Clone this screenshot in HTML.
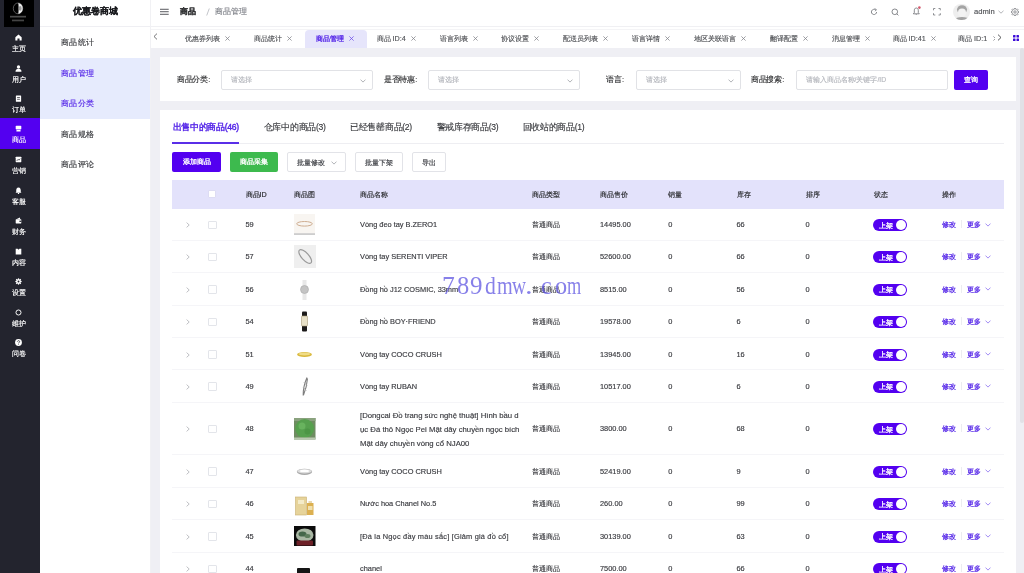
<!DOCTYPE html>
<html><head><meta charset="utf-8">
<style>
*{box-sizing:border-box;margin:0;padding:0}
html,body{width:1024px;height:573px;overflow:hidden;background:#efeff4;font-family:"Liberation Sans",sans-serif;color:#303133;-webkit-text-stroke-width:0.15px}
.abs{position:absolute}
#side{left:0;top:0;width:40px;height:573px;background:#23242e}
#logo{left:4px;top:0;width:30px;height:27px;background:#000}
.si{position:absolute;left:0;width:40px;height:31px;color:#fff;font-size:7px;text-align:center}
.si .ic{position:absolute;left:15px;top:7px;width:7px;height:7px}
.si .tx{position:absolute;left:0;width:38px;top:17px;line-height:9px;font-weight:normal;font-size:7.2px}
.si.on{background:#5300f0;height:31.5px;margin-top:-1px}
#side2{left:40px;top:0;width:111px;height:573px;background:#fff;border-right:1px solid #f1f1f4}
#title{left:0;top:0;width:110px;height:27px;line-height:23px;text-align:center;font-size:9px;font-weight:bold;color:#17181c;border-bottom:1px solid #efeff3}
.mi{position:absolute;left:0;width:110px;height:30.5px;line-height:31px;padding-left:21px;font-size:8.4px;letter-spacing:0.35px;color:#3b3c40}
.mi.on{background:#e6ebfd;color:#5526e8}
#hdr{left:151px;top:0;width:873px;height:27px;background:#fff;border-bottom:1px solid #f0f0f3}
#tabs{left:151px;top:27px;width:873px;height:21px;background:#fff}
.tab{position:absolute;top:2.6px;height:18.4px}
.tab.on{background:#e6e5fb;border-radius:4px 4px 0 0}
.tabt{position:absolute;top:6.7px;line-height:9.5px;font-size:7.2px;color:#505256;white-space:nowrap}
.tabt.on{color:#5526e8;-webkit-text-stroke-width:0.3px}
.tabt.on .x path{stroke:#6a4ae8}
.tabt .x{margin-left:5.4px;vertical-align:-0.3px}
.card{position:absolute;left:160px;width:856px;background:#fff}
.lbl{position:absolute;font-size:7.5px;letter-spacing:-0.35px;color:#303133;line-height:10px;margin-top:-0.4px}
.sel{position:absolute;height:19.5px;border:1px solid #e1e2e6;border-radius:2px;background:#fff}
.sel .ph{position:absolute;left:9px;top:3.5px;font-size:6.8px;color:#b5b7bd;line-height:10px}
.btn{position:absolute;height:19.5px;line-height:19px;border-radius:2px;font-size:7.2px;text-align:center;-webkit-text-stroke-width:0.3px}
.btnw{border:1px solid #e2e3e8;color:#45474c;background:#fff;-webkit-text-stroke-width:0.2px}
.ctab{position:absolute;top:11.5px;font-size:8.6px;letter-spacing:-0.3px;line-height:10px;color:#3b3c40;white-space:nowrap}
.ctab.on{color:#5526e8;font-weight:normal;-webkit-text-stroke-width:0.4px}
#tbl{position:absolute;left:172px;top:180.25px;width:832px}
.tr{position:relative;width:832px;border-bottom:1px solid #f5f5f8;height:32.4px}
.th{background:#e3e2fb;height:28.25px;border-bottom:none}
.rc{position:absolute;left:0;width:832px;height:32.4px}
.c{position:absolute;top:11.5px;font-size:7.4px;line-height:9.5px;color:#38393e;white-space:nowrap}
.th .c{top:9.5px;font-size:7.2px;color:#2e2f33;-webkit-text-stroke-width:0.18px}
.nm3{top:0;line-height:14px;font-size:7.75px}
.ex{position:absolute;left:14px;top:13.5px}
.cb{position:absolute;left:36px;top:12px;width:8.6px;height:8.5px;border:1px solid #e3e5ea;border-radius:1px;background:#fff}
.hcb{left:36px;top:10px;width:8px;height:7.6px;border-color:#dddcf3}
.im{position:absolute}
.sw{position:absolute;left:701px;top:10.5px;width:34px;height:12px;border-radius:6px;background:#5300f0}
.sw span{position:absolute;left:5.5px;top:1.5px;font-size:6.8px;line-height:9px;color:#fff;-webkit-text-stroke-width:0.3px}
.sw i{position:absolute;right:1px;top:1px;width:10px;height:10px;border-radius:50%;background:#fff}
.op{position:absolute;left:769.75px;top:11.5px;white-space:nowrap;font-size:7.2px;line-height:9.5px;color:#5526e8;-webkit-text-stroke-width:0.25px}
.op b{display:inline-block;width:0.7px;height:8px;background:#ececf0;margin:0 5.5px 0 5.5px;vertical-align:-1px}
.op svg{margin-left:4px;vertical-align:0.5px}
#wm span{position:absolute;top:265.5px;font-family:'Liberation Serif',serif;font-size:25.6px;line-height:40px;color:rgba(95,85,225,0.75);-webkit-text-stroke-width:0;transform-origin:0 0;white-space:nowrap}
</style></head><body><div id="root" style="position:absolute;left:0;top:0;width:1024px;height:573px;will-change:transform">

<!-- dark sidebar -->
<div id="side" class="abs">
  <div id="logo" class="abs"><svg width="30" height="27" viewBox="0 0 30 27" style="position:absolute;left:0;top:0">
    <ellipse cx="14" cy="8.4" rx="4.7" ry="5.4" fill="none" stroke="#aaa" stroke-width="0.5"/>
    <path d="M14 3 A4.7 5.4 0 0 1 14 13.8 A0.6 5.4 0 0 0 14 3 Z" fill="#eeeeee"/>
    <ellipse cx="16.2" cy="8.4" rx="1.4" ry="2.4" fill="#9a9a9a"/>
    <rect x="6" y="15.8" width="16" height="1.7" fill="#4c4c4c"/>
    <rect x="8" y="19.6" width="12" height="1.7" fill="#444"/>
  </svg></div>
  <div class="si" style="top:27.00px"><svg class="ic" viewBox="0 0 8 8"><path d="M4 0.6 L7.6 3.6 V7.4 H5.2 V5.2 H2.8 V7.4 H0.4 V3.6 Z" fill="#fff"/></svg><div class="tx">主页</div></div>
  <div class="si" style="top:57.50px"><svg class="ic" viewBox="0 0 8 8"><circle cx="4" cy="2.3" r="1.9" fill="#fff"/><path d="M0.6 7.6 C0.6 5 2 4.6 4 4.6 C6 4.6 7.4 5 7.4 7.6 Z" fill="#fff"/></svg><div class="tx">用户</div></div>
  <div class="si" style="top:88.00px"><svg class="ic" viewBox="0 0 8 8"><rect x="1" y="0.6" width="6" height="7" rx="0.6" fill="#fff"/><rect x="2.4" y="2.6" width="3.2" height="0.8" fill="#23242e"/><rect x="2.4" y="4.4" width="3.2" height="0.8" fill="#23242e"/></svg><div class="tx">订单</div></div>
  <div class="si on" style="top:118.50px"><svg class="ic" viewBox="0 0 8 8"><rect x="0.8" y="0.8" width="6.4" height="4.4" rx="0.8" fill="#fff"/><rect x="1.6" y="5.8" width="4.8" height="1.6" rx="0.4" fill="#fff"/></svg><div class="tx">商品</div></div>
  <div class="si" style="top:149.00px"><svg class="ic" viewBox="0 0 8 8"><rect x="0.8" y="0.8" width="6.4" height="6.4" rx="0.5" fill="#fff"/><path d="M2 5.6 L3.6 3.8 L4.6 4.8 L6 3" stroke="#23242e" stroke-width="0.8" fill="none"/></svg><div class="tx">营销</div></div>
  <div class="si" style="top:179.50px"><svg class="ic" viewBox="0 0 8 8"><path d="M4 0.5 C6 0.5 6.6 2.2 6.6 4 V5.6 L7.4 6.6 H0.6 L1.4 5.6 V4 C1.4 2.2 2 0.5 4 0.5 Z" fill="#fff"/><circle cx="4" cy="7.3" r="0.8" fill="#fff"/></svg><div class="tx">客服</div></div>
  <div class="si" style="top:210.00px"><svg class="ic" viewBox="0 0 8 8"><rect x="0.8" y="2.6" width="6.4" height="4.8" rx="0.5" fill="#fff"/><path d="M1.5 2.6 L5.5 0.6 L6 2.6 Z" fill="#fff"/><rect x="5" y="4.2" width="2.2" height="1.4" fill="#23242e"/></svg><div class="tx">财务</div></div>
  <div class="si" style="top:240.50px"><svg class="ic" viewBox="0 0 8 8"><path d="M0.8 0.8 H3 L4 2 L5 0.8 H7.2 V7.4 H0.8 Z" fill="#fff"/></svg><div class="tx">内容</div></div>
  <div class="si" style="top:271.00px"><svg class="ic" viewBox="0 0 8 8"><circle cx="4" cy="4" r="2.6" fill="#fff"/><g stroke="#fff" stroke-width="1.4"><line x1="4" y1="0.4" x2="4" y2="7.6"/><line x1="0.4" y1="4" x2="7.6" y2="4"/><line x1="1.4" y1="1.4" x2="6.6" y2="6.6"/><line x1="6.6" y1="1.4" x2="1.4" y2="6.6"/></g><circle cx="4" cy="4" r="1.1" fill="#23242e"/></svg><div class="tx">设置</div></div>
  <div class="si" style="top:301.50px"><svg class="ic" viewBox="0 0 8 8"><circle cx="4" cy="4" r="2.9" stroke="#fff" stroke-width="1.1" fill="none"/></svg><div class="tx">维护</div></div>
  <div class="si" style="top:332.00px"><svg class="ic" viewBox="0 0 8 8"><circle cx="4" cy="4" r="3.9" fill="#fff"/><path d="M2.8 3.1 C2.8 1.5 5.3 1.5 5.3 3 C5.3 3.9 4.1 4 4.1 5" stroke="#23242e" stroke-width="0.85" fill="none"/><circle cx="4.1" cy="6.2" r="0.5" fill="#23242e"/></svg><div class="tx">问卷</div></div>
</div>

<!-- secondary sidebar -->
<div id="side2" class="abs">
  <div id="title" class="abs">优惠卷商城</div>
  <div class="mi" style="top:27px">商品统计</div>
  <div class="mi on" style="top:57.5px">商品管理</div>
  <div class="mi on" style="top:88px">商品分类</div>
  <div class="mi" style="top:118.5px">商品规格</div>
  <div class="mi" style="top:149px">商品评论</div>
</div>

<div id="hdr" class="abs">
  <svg class="abs" style="left:9.3px;top:8px" width="9" height="7" viewBox="0 0 9 7"><rect x="0" y="0.8" width="8.7" height="0.9" fill="#45474c"/><rect x="0" y="3.3" width="8.7" height="0.9" fill="#45474c"/><rect x="0" y="5.8" width="8.7" height="0.9" fill="#45474c"/></svg>
  <div class="abs" style="left:29px;top:7px;font-size:8px;line-height:10px;font-weight:bold;color:#303133">商品</div>
  <svg class="abs" style="left:54.5px;top:8px" width="4" height="8" viewBox="0 0 4 8"><path d="M3.3 0.5 L0.7 7.5" stroke="#b4b6bc" stroke-width="0.8"/></svg>
  <div class="abs" style="left:63.5px;top:7px;font-size:8px;line-height:10px;color:#80838a">商品管理</div>
  <svg class="abs" style="left:719px;top:7.5px" width="8" height="8" viewBox="0 0 8 8"><path d="M6.6 4 A2.6 2.6 0 1 1 5.6 1.9" stroke="#6a6c71" stroke-width="0.8" fill="none"/><path d="M4.6 0.6 L6.4 1.6 L5.2 3.2" stroke="#6a6c71" stroke-width="0.75" fill="none"/></svg>
  <svg class="abs" style="left:739.5px;top:7.5px" width="8" height="8" viewBox="0 0 8 8"><circle cx="3.8" cy="3.8" r="2.8" stroke="#6a6c71" stroke-width="0.8" fill="none"/><path d="M5.8 5.8 L7.4 7.4" stroke="#6a6c71" stroke-width="0.8"/></svg>
  <svg class="abs" style="left:761px;top:6px" width="9" height="9" viewBox="0 0 9 9"><path d="M4.3 2 C6 2 6.3 3.4 6.3 4.8 V6.6 L7.3 7.8 H1.3 L2.3 6.6 V4.8 C2.3 3.4 2.6 2 4.3 2 Z" stroke="#6a6c71" stroke-width="0.8" fill="none"/><path d="M3.7 8.6 H4.9" stroke="#6a6c71" stroke-width="0.6"/><circle cx="7.4" cy="1.6" r="1.3" fill="#d4566a"/></svg>
  <svg class="abs" style="left:781.5px;top:8px" width="8" height="7.5" viewBox="0 0 8 7.5"><path d="M0.5 2.3 V0.5 H2.3 M5.5 0.5 H7.3 V2.3 M7.3 5.2 V7 H5.5 M2.3 7 H0.5 V5.2" stroke="#74767b" stroke-width="0.8" fill="none"/></svg>
  <div class="abs" style="left:802.2px;top:3.5px;width:16.6px;height:16.6px;border-radius:50%;overflow:hidden;background:#eeeeee"><svg style="position:absolute;left:-0.7px;top:-0.7px" width="18" height="18" viewBox="0 0 18 18"><ellipse cx="9" cy="6.6" rx="5" ry="4.3" fill="#a4a4a4"/><ellipse cx="9" cy="9.6" rx="4" ry="4.2" fill="#f3f3f3"/><path d="M1 17 C3 13 15 13 17 17 L17 19 L1 19 Z" fill="#a3a3a3"/></svg></div>
  <div class="abs" style="left:823px;top:6.5px;font-size:7.6px;line-height:10px;color:#505256">admin</div>
  <svg class="abs" style="left:847px;top:9.5px" width="6" height="4" viewBox="0 0 6 4"><path d="M0.5 0.8 L3 3.2 L5.5 0.8" stroke="#909399" stroke-width="0.7" fill="none"/></svg>
  <svg class="abs" style="left:860px;top:7.5px" width="8" height="8" viewBox="0 0 8 8"><path d="M6.83 3.37 L7.75 3.39 L7.75 4.61 L6.83 4.63 L6.45 5.55 L7.08 6.22 L6.22 7.08 L5.55 6.45 L4.63 6.83 L4.61 7.75 L3.39 7.75 L3.37 6.83 L2.45 6.45 L1.78 7.08 L0.92 6.22 L1.55 5.55 L1.17 4.63 L0.25 4.61 L0.25 3.39 L1.17 3.37 L1.55 2.45 L0.92 1.78 L1.78 0.92 L2.45 1.55 L3.37 1.17 L3.39 0.25 L4.61 0.25 L4.63 1.17 L5.55 1.55 L6.22 0.92 L7.08 1.78 L6.45 2.45 Z" stroke="#6a6c71" stroke-width="0.7" fill="none" stroke-linejoin="round"/><circle cx="4" cy="4" r="1.2" stroke="#6a6c71" stroke-width="0.7" fill="none"/></svg>
</div>
<div id="tabs" class="abs">
  <svg class="abs" style="left:1.8px;top:6px" width="5" height="7" viewBox="0 0 5 7"><path d="M4 0.6 L1 3.5 L4 6.4" stroke="#505256" stroke-width="0.8" fill="none"/></svg>
  <div class="abs" style="left:0;top:2px;width:873px;height:0.8px;background:#f4f4f6"></div>
  <div class="tab on" style="left:154px;width:62px"></div>
  <div class="abs" style="left:20px;top:0;width:824px;height:21px;overflow:hidden">
    <div class="tabt" style="left:14.00px">优惠券列表<svg class="x" width="5" height="5" viewBox="0 0 5 5"><path d="M0.4 0.4 L4.6 4.6 M4.6 0.4 L0.4 4.6" stroke="#808288" stroke-width="0.75"/></svg></div>
    <div class="tabt" style="left:82.75px">商品统计<svg class="x" width="5" height="5" viewBox="0 0 5 5"><path d="M0.4 0.4 L4.6 4.6 M4.6 0.4 L0.4 4.6" stroke="#808288" stroke-width="0.75"/></svg></div>
    <div class="tabt on" style="left:144.75px">商品管理<svg class="x" width="5" height="5" viewBox="0 0 5 5"><path d="M0.4 0.4 L4.6 4.6 M4.6 0.4 L0.4 4.6" stroke="#808288" stroke-width="0.75"/></svg></div>
    <div class="tabt" style="left:205.50px">商品 ID:4<svg class="x" width="5" height="5" viewBox="0 0 5 5"><path d="M0.4 0.4 L4.6 4.6 M4.6 0.4 L0.4 4.6" stroke="#808288" stroke-width="0.75"/></svg></div>
    <div class="tabt" style="left:269.00px">语言列表<svg class="x" width="5" height="5" viewBox="0 0 5 5"><path d="M0.4 0.4 L4.6 4.6 M4.6 0.4 L0.4 4.6" stroke="#808288" stroke-width="0.75"/></svg></div>
    <div class="tabt" style="left:329.80px">协议设置<svg class="x" width="5" height="5" viewBox="0 0 5 5"><path d="M0.4 0.4 L4.6 4.6 M4.6 0.4 L0.4 4.6" stroke="#808288" stroke-width="0.75"/></svg></div>
    <div class="tabt" style="left:392.00px">配送员列表<svg class="x" width="5" height="5" viewBox="0 0 5 5"><path d="M0.4 0.4 L4.6 4.6 M4.6 0.4 L0.4 4.6" stroke="#808288" stroke-width="0.75"/></svg></div>
    <div class="tabt" style="left:461.00px">语言详情<svg class="x" width="5" height="5" viewBox="0 0 5 5"><path d="M0.4 0.4 L4.6 4.6 M4.6 0.4 L0.4 4.6" stroke="#808288" stroke-width="0.75"/></svg></div>
    <div class="tabt" style="left:522.50px">地区关联语言<svg class="x" width="5" height="5" viewBox="0 0 5 5"><path d="M0.4 0.4 L4.6 4.6 M4.6 0.4 L0.4 4.6" stroke="#808288" stroke-width="0.75"/></svg></div>
    <div class="tabt" style="left:599.00px">翻译配置<svg class="x" width="5" height="5" viewBox="0 0 5 5"><path d="M0.4 0.4 L4.6 4.6 M4.6 0.4 L0.4 4.6" stroke="#808288" stroke-width="0.75"/></svg></div>
    <div class="tabt" style="left:660.50px">消息管理<svg class="x" width="5" height="5" viewBox="0 0 5 5"><path d="M0.4 0.4 L4.6 4.6 M4.6 0.4 L0.4 4.6" stroke="#808288" stroke-width="0.75"/></svg></div>
    <div class="tabt" style="left:721.60px">商品 ID:41<svg class="x" width="5" height="5" viewBox="0 0 5 5"><path d="M0.4 0.4 L4.6 4.6 M4.6 0.4 L0.4 4.6" stroke="#808288" stroke-width="0.75"/></svg></div>
    <div class="tabt" style="left:787.00px">商品 ID:1<svg class="x" width="5" height="5" viewBox="0 0 5 5"><path d="M0.4 0.4 L4.6 4.6 M4.6 0.4 L0.4 4.6" stroke="#808288" stroke-width="0.75"/></svg></div>
  </div>
  <svg class="abs" style="left:846px;top:6.5px" width="5" height="7" viewBox="0 0 5 7"><path d="M1 0.6 L4 3.5 L1 6.4" stroke="#303133" stroke-width="0.8" fill="none"/></svg>
  <svg class="abs" style="left:862px;top:8px" width="6" height="6" viewBox="0 0 6 6"><rect x="0" y="0" width="2.5" height="2.5" rx="0.5" fill="#3c0cd8"/><rect x="3.5" y="0" width="2.5" height="2.5" rx="0.5" fill="#3c0cd8"/><rect x="0" y="3.5" width="2.5" height="2.5" rx="0.5" fill="#3c0cd8"/><rect x="3.5" y="3.5" width="2.5" height="2.5" rx="0.5" fill="#3c0cd8"/></svg>
</div>

<div class="card" style="top:57px;height:43.5px"><div class="abs" style="left:0;top:0.5px;width:856px;height:43px">
  <div class="lbl" style="left:17px;top:17.5px">商品分类<span style="margin-left:0.6px">:</span></div>
  <div class="sel" style="left:61px;top:12.5px;width:152px"><div class="ph">请选择</div><svg class="abs" style="left:138px;top:7.5px" width="6" height="4" viewBox="0 0 6 4"><path d="M0.5 0.6 L3 3.1 L5.5 0.6" stroke="#909399" stroke-width="0.7" fill="none"/></svg></div>
  <div class="lbl" style="left:224px;top:17.5px">是否特惠<span style="margin-left:0.6px">:</span></div>
  <div class="sel" style="left:268px;top:12.5px;width:152px"><div class="ph">请选择</div><svg class="abs" style="left:138px;top:7.5px" width="6" height="4" viewBox="0 0 6 4"><path d="M0.5 0.6 L3 3.1 L5.5 0.6" stroke="#909399" stroke-width="0.7" fill="none"/></svg></div>
  <div class="lbl" style="left:446px;top:17.5px">语言<span style="margin-left:0.6px">:</span></div>
  <div class="sel" style="left:475.5px;top:12.5px;width:105px"><div class="ph">请选择</div><svg class="abs" style="left:91px;top:7.5px" width="6" height="4" viewBox="0 0 6 4"><path d="M0.5 0.6 L3 3.1 L5.5 0.6" stroke="#909399" stroke-width="0.7" fill="none"/></svg></div>
  <div class="lbl" style="left:591px;top:17.5px">商品搜索<span style="margin-left:0.6px">:</span></div>
  <div class="sel" style="left:635.5px;top:12.5px;width:152.5px"><div class="ph">请输入商品名称/关键字/ID</div></div>
  <div class="btn" style="left:794px;top:12.5px;width:34px;background:#5300f0;color:#fff">查询</div>
</div></div>
<div class="card" style="top:110px;height:470px"><div class="abs" style="left:0;top:0.5px;width:856px;height:470px">
  <div class="ctab on" style="left:12.5px">出售中的商品(46)</div>
  <div class="ctab" style="left:103.75px">仓库中的商品(3)</div>
  <div class="ctab" style="left:190px">已经售罄商品(2)</div>
  <div class="ctab" style="left:276.5px">警戒库存商品(3)</div>
  <div class="ctab" style="left:362.5px">回收站的商品(1)</div>
  <div class="abs" style="left:12px;top:32.5px;width:832px;height:1px;background:#eeeef2"></div>
  <div class="abs" style="left:12px;top:31.6px;width:67px;height:1.5px;background:#5a2ee8"></div>
  <div class="btn" style="left:12px;top:41.5px;width:49px;background:#5300f0;color:#fff">添加商品</div>
  <div class="btn" style="left:69.5px;top:41.5px;width:48.5px;background:#3dba4e;color:#fff">商品采集</div>
  <div class="btn btnw" style="left:127px;top:41.5px;width:58.5px;text-align:left;padding-left:9px">批量修改<svg style="position:absolute;left:42.5px;top:8px" width="6" height="4" viewBox="0 0 6 4"><path d="M0.5 0.6 L3 3.1 L5.5 0.6" stroke="#909399" stroke-width="0.7" fill="none"/></svg></div>
  <div class="btn btnw" style="left:194.5px;top:41.5px;width:48.5px">批量下架</div>
  <div class="btn btnw" style="left:251.5px;top:41.5px;width:34px">导出</div>
</div></div>

<div id="tbl">
  <div class="tr th"><div class="cb hcb"></div><div class="c" style="left:73.5px">商品ID</div><div class="c" style="left:122px">商品图</div><div class="c" style="left:188px">商品名称</div><div class="c" style="left:360px">商品类型</div><div class="c" style="left:428px">商品售价</div><div class="c" style="left:496.25px">销量</div><div class="c" style="left:564.5px">库存</div><div class="c" style="left:633.5px">排序</div><div class="c" style="left:701.75px">状态</div><div class="c" style="left:769.75px">操作</div></div>
  <div class="tr" style="height:32.4px"><div class="rc" style="top:0.00px"><svg class="ex" width="4" height="6" viewBox="0 0 4 6"><path d="M0.6 0.6 L3.2 3 L0.6 5.4" stroke="#a3a5aa" stroke-width="0.7" fill="none"/></svg><div class="cb"></div><div class="c" style="left:73.5px">59</div><svg class="im" style="left:121.8px;top:5.5px" width="21" height="21" viewBox="0 0 21 21"><rect width="21" height="21" fill="#f8f5f1"/><ellipse cx="10.5" cy="9.8" rx="7.8" ry="2.3" fill="none" stroke="#cfae92" stroke-width="1"/><rect x="0" y="19.2" width="21" height="1.8" fill="#cdcdcd"/></svg><div class="c" style="left:188px">Vòng đeo tay B.ZERO1</div><div class="c" style="left:360px">普通商品</div><div class="c" style="left:428px">14495.00</div><div class="c" style="left:496.25px">0</div><div class="c" style="left:564.5px">66</div><div class="c" style="left:633.5px">0</div><div class="sw"><span>上架</span><i></i></div><div class="op"><span>修改</span><b></b><span class="mo">更多</span><svg width="6" height="4" viewBox="0 0 6 4"><path d="M0.5 0.6 L3 3.1 L5.5 0.6" stroke="#7b5cf0" stroke-width="0.7" fill="none"/></svg></div></div></div>
  <div class="tr" style="height:32.4px"><div class="rc" style="top:0.00px"><svg class="ex" width="4" height="6" viewBox="0 0 4 6"><path d="M0.6 0.6 L3.2 3 L0.6 5.4" stroke="#a3a5aa" stroke-width="0.7" fill="none"/></svg><div class="cb"></div><div class="c" style="left:73.5px">57</div><svg class="im" style="left:121.6px;top:4.4px" width="22.5" height="23" viewBox="0 0 22.5 23"><rect width="22.5" height="23" fill="#efefef"/><ellipse cx="11.2" cy="11.5" rx="8.6" ry="3.6" transform="rotate(48 11.2 11.5)" fill="none" stroke="#9a9a9a" stroke-width="1.2"/></svg><div class="c" style="left:188px">Vòng tay SERENTI VIPER</div><div class="c" style="left:360px">普通商品</div><div class="c" style="left:428px">52600.00</div><div class="c" style="left:496.25px">0</div><div class="c" style="left:564.5px">66</div><div class="c" style="left:633.5px">0</div><div class="sw"><span>上架</span><i></i></div><div class="op"><span>修改</span><b></b><span class="mo">更多</span><svg width="6" height="4" viewBox="0 0 6 4"><path d="M0.5 0.6 L3 3.1 L5.5 0.6" stroke="#7b5cf0" stroke-width="0.7" fill="none"/></svg></div></div></div>
  <div class="tr" style="height:32.4px"><div class="rc" style="top:0.00px"><svg class="ex" width="4" height="6" viewBox="0 0 4 6"><path d="M0.6 0.6 L3.2 3 L0.6 5.4" stroke="#a3a5aa" stroke-width="0.7" fill="none"/></svg><div class="cb"></div><div class="c" style="left:73.5px">56</div><svg class="im" style="left:122px;top:5.5px" width="21" height="21" viewBox="0 0 21 21"><rect x="8.5" y="1" width="4" height="20" fill="#e8e8e8"/><circle cx="10.5" cy="10.5" r="4" fill="#c4c4c4" stroke="#aaa" stroke-width="0.6"/></svg><div class="c" style="left:188px">Đồng hồ J12 COSMIC, 33mm</div><div class="c" style="left:360px">普通商品</div><div class="c" style="left:428px">8515.00</div><div class="c" style="left:496.25px">0</div><div class="c" style="left:564.5px">56</div><div class="c" style="left:633.5px">0</div><div class="sw"><span>上架</span><i></i></div><div class="op"><span>修改</span><b></b><span class="mo">更多</span><svg width="6" height="4" viewBox="0 0 6 4"><path d="M0.5 0.6 L3 3.1 L5.5 0.6" stroke="#7b5cf0" stroke-width="0.7" fill="none"/></svg></div></div></div>
  <div class="tr" style="height:32.4px"><div class="rc" style="top:0.00px"><svg class="ex" width="4" height="6" viewBox="0 0 4 6"><path d="M0.6 0.6 L3.2 3 L0.6 5.4" stroke="#a3a5aa" stroke-width="0.7" fill="none"/></svg><div class="cb"></div><div class="c" style="left:73.5px">54</div><svg class="im" style="left:122px;top:5.5px" width="21" height="21" viewBox="0 0 21 21"><rect x="8" y="0.5" width="5" height="20" rx="1" fill="#1c1a1a"/><rect x="7.5" y="5" width="6" height="10" rx="0.8" fill="#e8e1c8" stroke="#a89a78" stroke-width="0.6"/></svg><div class="c" style="left:188px">Đồng hồ BOY·FRIEND</div><div class="c" style="left:360px">普通商品</div><div class="c" style="left:428px">19578.00</div><div class="c" style="left:496.25px">0</div><div class="c" style="left:564.5px">6</div><div class="c" style="left:633.5px">0</div><div class="sw"><span>上架</span><i></i></div><div class="op"><span>修改</span><b></b><span class="mo">更多</span><svg width="6" height="4" viewBox="0 0 6 4"><path d="M0.5 0.6 L3 3.1 L5.5 0.6" stroke="#7b5cf0" stroke-width="0.7" fill="none"/></svg></div></div></div>
  <div class="tr" style="height:32.4px"><div class="rc" style="top:0.00px"><svg class="ex" width="4" height="6" viewBox="0 0 4 6"><path d="M0.6 0.6 L3.2 3 L0.6 5.4" stroke="#a3a5aa" stroke-width="0.7" fill="none"/></svg><div class="cb"></div><div class="c" style="left:73.5px">51</div><svg class="im" style="left:122px;top:5.5px" width="21" height="21" viewBox="0 0 21 21"><ellipse cx="10.5" cy="10.5" rx="7.4" ry="2.6" fill="#d9b83a"/><ellipse cx="10.5" cy="10" rx="6" ry="1.4" fill="#f0dc86"/></svg><div class="c" style="left:188px">Vòng tay COCO CRUSH</div><div class="c" style="left:360px">普通商品</div><div class="c" style="left:428px">13945.00</div><div class="c" style="left:496.25px">0</div><div class="c" style="left:564.5px">16</div><div class="c" style="left:633.5px">0</div><div class="sw"><span>上架</span><i></i></div><div class="op"><span>修改</span><b></b><span class="mo">更多</span><svg width="6" height="4" viewBox="0 0 6 4"><path d="M0.5 0.6 L3 3.1 L5.5 0.6" stroke="#7b5cf0" stroke-width="0.7" fill="none"/></svg></div></div></div>
  <div class="tr" style="height:32.4px"><div class="rc" style="top:0.00px"><svg class="ex" width="4" height="6" viewBox="0 0 4 6"><path d="M0.6 0.6 L3.2 3 L0.6 5.4" stroke="#a3a5aa" stroke-width="0.7" fill="none"/></svg><div class="cb"></div><div class="c" style="left:73.5px">49</div><svg class="im" style="left:122px;top:5.5px" width="21" height="21" viewBox="0 0 21 21"><path d="M13 1.5 C11 6 9 11 9.2 19.5 M13.5 2.5 C13 9 11.5 14 9.5 19" stroke="#7d7d7d" stroke-width="1.1" fill="none"/><path d="M10 6.5 L13 9.5 M9.3 11.5 L12.3 14.5" stroke="#a8a8a8" stroke-width="0.9"/></svg><div class="c" style="left:188px">Vòng tay RUBAN</div><div class="c" style="left:360px">普通商品</div><div class="c" style="left:428px">10517.00</div><div class="c" style="left:496.25px">0</div><div class="c" style="left:564.5px">6</div><div class="c" style="left:633.5px">0</div><div class="sw"><span>上架</span><i></i></div><div class="op"><span>修改</span><b></b><span class="mo">更多</span><svg width="6" height="4" viewBox="0 0 6 4"><path d="M0.5 0.6 L3 3.1 L5.5 0.6" stroke="#7b5cf0" stroke-width="0.7" fill="none"/></svg></div></div></div>
  <div class="tr" style="height:52.6px"><div class="rc" style="top:10.10px"><svg class="ex" width="4" height="6" viewBox="0 0 4 6"><path d="M0.6 0.6 L3.2 3 L0.6 5.4" stroke="#a3a5aa" stroke-width="0.7" fill="none"/></svg><div class="cb"></div><div class="c" style="left:73.5px">48</div><svg class="im" style="left:122px;top:5.5px" width="21.5" height="21.5" viewBox="0 0 21.5 21.5"><rect width="21.5" height="21.5" fill="#6f8c62"/><rect x="0" y="0" width="21.5" height="3" fill="#8aa27e"/><circle cx="10.7" cy="10.5" r="9.4" fill="#56a04e"/><circle cx="8" cy="8" r="3.5" fill="#6ab560" opacity="0.9"/><circle cx="13.5" cy="13.5" r="3" fill="#4a9444" opacity="0.8"/><rect x="0" y="19.5" width="21.5" height="2" fill="#b9c9b0"/></svg><div class="c" style="left:360px">普通商品</div><div class="c" style="left:428px">3800.00</div><div class="c" style="left:496.25px">0</div><div class="c" style="left:564.5px">68</div><div class="c" style="left:633.5px">0</div><div class="sw"><span>上架</span><i></i></div><div class="op"><span>修改</span><b></b><span class="mo">更多</span><svg width="6" height="4" viewBox="0 0 6 4"><path d="M0.5 0.6 L3 3.1 L5.5 0.6" stroke="#7b5cf0" stroke-width="0.7" fill="none"/></svg></div></div><div class="c nm3" style="left:188px;top:5.80px">[Dongcai Đồ trang sức nghệ thuật] Hình bầu d<br>ục Đá thô Ngọc Pei Mặt dây chuyền ngọc bích<br>Mặt dây chuyền vòng cổ NJA00</div></div>
  <div class="tr" style="height:32.4px"><div class="rc" style="top:0.00px"><svg class="ex" width="4" height="6" viewBox="0 0 4 6"><path d="M0.6 0.6 L3.2 3 L0.6 5.4" stroke="#a3a5aa" stroke-width="0.7" fill="none"/></svg><div class="cb"></div><div class="c" style="left:73.5px">47</div><svg class="im" style="left:122px;top:5.5px" width="21" height="21" viewBox="0 0 21 21"><ellipse cx="10.5" cy="10.8" rx="7.6" ry="3.1" fill="#a9a9a9"/><ellipse cx="10.5" cy="10.2" rx="6.8" ry="2.3" fill="#dedede"/><ellipse cx="10.5" cy="9.9" rx="4.6" ry="1.2" fill="#ffffff"/></svg><div class="c" style="left:188px">Vòng tay COCO CRUSH</div><div class="c" style="left:360px">普通商品</div><div class="c" style="left:428px">52419.00</div><div class="c" style="left:496.25px">0</div><div class="c" style="left:564.5px">9</div><div class="c" style="left:633.5px">0</div><div class="sw"><span>上架</span><i></i></div><div class="op"><span>修改</span><b></b><span class="mo">更多</span><svg width="6" height="4" viewBox="0 0 6 4"><path d="M0.5 0.6 L3 3.1 L5.5 0.6" stroke="#7b5cf0" stroke-width="0.7" fill="none"/></svg></div></div></div>
  <div class="tr" style="height:32.4px"><div class="rc" style="top:0.00px"><svg class="ex" width="4" height="6" viewBox="0 0 4 6"><path d="M0.6 0.6 L3.2 3 L0.6 5.4" stroke="#a3a5aa" stroke-width="0.7" fill="none"/></svg><div class="cb"></div><div class="c" style="left:73.5px">46</div><svg class="im" style="left:122px;top:8px" width="21" height="21" viewBox="0 0 21 21"><rect x="1.5" y="1" width="11" height="18" fill="#e6d39a"/><rect x="1.5" y="1" width="11" height="18" fill="none" stroke="#c9b070" stroke-width="0.6"/><rect x="4" y="4" width="6" height="4" fill="#f4ebc8"/><rect x="13" y="7" width="6.5" height="12" fill="#dcb050"/><rect x="14.5" y="5" width="3.5" height="2" fill="#e8d8b0"/><rect x="14" y="10" width="4.5" height="4" fill="#f0e0b0"/></svg><div class="c" style="left:188px">Nước hoa Chanel No.5</div><div class="c" style="left:360px">普通商品</div><div class="c" style="left:428px">260.00</div><div class="c" style="left:496.25px">0</div><div class="c" style="left:564.5px">99</div><div class="c" style="left:633.5px">0</div><div class="sw"><span>上架</span><i></i></div><div class="op"><span>修改</span><b></b><span class="mo">更多</span><svg width="6" height="4" viewBox="0 0 6 4"><path d="M0.5 0.6 L3 3.1 L5.5 0.6" stroke="#7b5cf0" stroke-width="0.7" fill="none"/></svg></div></div></div>
  <div class="tr" style="height:32.4px"><div class="rc" style="top:0.00px"><svg class="ex" width="4" height="6" viewBox="0 0 4 6"><path d="M0.6 0.6 L3.2 3 L0.6 5.4" stroke="#a3a5aa" stroke-width="0.7" fill="none"/></svg><div class="cb"></div><div class="c" style="left:73.5px">45</div><svg class="im" style="left:122px;top:6px" width="21.5" height="20" viewBox="0 0 21.5 20"><rect width="21.5" height="20" fill="#0c0c0c"/><ellipse cx="10.7" cy="9" rx="8.8" ry="6.6" fill="#a9b7a4"/><ellipse cx="8.5" cy="8" rx="4" ry="2.6" fill="#44664a"/><ellipse cx="13.5" cy="10" rx="3" ry="2" fill="#5d7d5d"/><rect x="2.5" y="14.5" width="16.5" height="5" rx="1" fill="#6e2128"/></svg><div class="c" style="left:188px;letter-spacing:0.2px">[Đá la Ngọc đầy màu sắc] [Giảm giá đồ cổ]</div><div class="c" style="left:360px">普通商品</div><div class="c" style="left:428px">30139.00</div><div class="c" style="left:496.25px">0</div><div class="c" style="left:564.5px">63</div><div class="c" style="left:633.5px">0</div><div class="sw"><span>上架</span><i></i></div><div class="op"><span>修改</span><b></b><span class="mo">更多</span><svg width="6" height="4" viewBox="0 0 6 4"><path d="M0.5 0.6 L3 3.1 L5.5 0.6" stroke="#7b5cf0" stroke-width="0.7" fill="none"/></svg></div></div></div>
  <div class="tr" style="height:32.4px"><div class="rc" style="top:0.00px"><svg class="ex" width="4" height="6" viewBox="0 0 4 6"><path d="M0.6 0.6 L3.2 3 L0.6 5.4" stroke="#a3a5aa" stroke-width="0.7" fill="none"/></svg><div class="cb"></div><div class="c" style="left:73.5px">44</div><svg class="im" style="left:124.5px;top:15.2px" width="13" height="8" viewBox="0 0 13 8"><rect x="0" y="0" width="13" height="8" rx="1" fill="#151515"/></svg><div class="c" style="left:188px">chanel</div><div class="c" style="left:360px">普通商品</div><div class="c" style="left:428px">7500.00</div><div class="c" style="left:496.25px">0</div><div class="c" style="left:564.5px">66</div><div class="c" style="left:633.5px">0</div><div class="sw"><span>上架</span><i></i></div><div class="op"><span>修改</span><b></b><span class="mo">更多</span><svg width="6" height="4" viewBox="0 0 6 4"><path d="M0.5 0.6 L3 3.1 L5.5 0.6" stroke="#7b5cf0" stroke-width="0.7" fill="none"/></svg></div></div></div>
</div>
<!--endtbl-->
<div id="wm"><span style="left:441.90px;transform:scaleX(1.000)">7</span><span style="left:456.85px;transform:scaleX(0.955)">8</span><span style="left:470.27px;transform:scaleX(0.977)">9</span><span style="left:484.65px;transform:scaleX(0.850)">d</span><span style="left:496.81px;transform:scaleX(0.789)">m</span><span style="left:511.80px;transform:scaleX(0.761)">w</span><span style="left:525.30px;transform:scaleX(1.200)">.</span><span style="left:540.86px;transform:scaleX(0.940)">c</span><span style="left:554.85px;transform:scaleX(0.950)">o</span><span style="left:567.38px;transform:scaleX(0.717)">m</span></div>
<div class="abs" style="left:1020px;top:48px;width:4px;height:375px;background:#e1e1e6;border-radius:2px"></div>
</div></body></html>
